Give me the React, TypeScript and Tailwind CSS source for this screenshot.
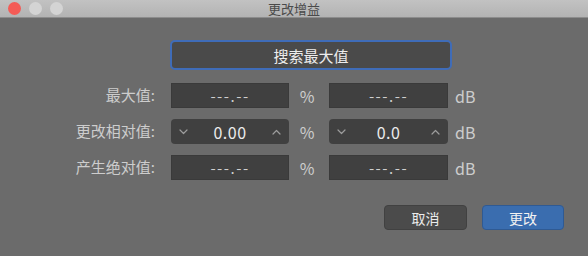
import React from 'react';

const FONT = { fontFamily: '"Noto Sans CJK SC", "Noto Sans", sans-serif' };

function Chevron({ up }: { up?: boolean }) {
    return (
        <svg width="9" height="6" viewBox="0 0 9 6" className="shrink-0">
            <path
                d={up ? 'M1 5 L4.5 1.5 L8 5' : 'M1 1 L4.5 4.5 L8 1'}
                fill="none"
                stroke="#9c9c9c"
                strokeWidth="1.2"
                strokeLinecap="round"
                strokeLinejoin="round"
            />
        </svg>
    );
}

function Field({ value, stepper, w }: { value: string; stepper?: boolean; w: string }) {
    if (stepper) {
        return (
            <div className={`${w} h-[25px] rounded-[4px] bg-[#404040] flex items-center justify-between px-[8px]`}>
                <Chevron />
                <span className="text-[16px] text-[#ececec] leading-none tracking-[0.5px]">{value}</span>
                <Chevron up />
            </div>
        );
    }
    return (
        <div className={`${w} h-[25px] bg-[#404040] border border-[#3a3a3a] flex items-center justify-center`}>
            <span className="text-[15px] text-[#cfcfcf] leading-none tracking-[1.5px]">{value}</span>
        </div>
    );
}

function Row({ label, left, right, stepper }: { label: string; left: string; right: string; stepper?: boolean }) {
    return (
        <div className="flex items-center h-[25px]">
            <div className="w-[157px] text-right text-[15px] text-[#cdcdcd] pr-[2px]">{label}</div>
            <div className="w-[14px]" />
            <Field value={left} stepper={stepper} w="w-[118px]" />
            <div className="w-[40px] text-center text-[16px] text-[#cdcdcd] pr-[4px]">%</div>
            <Field value={right} stepper={stepper} w="w-[119px]" />
            <div className="pl-[7px] text-[16px] text-[#cdcdcd]">dB</div>
        </div>
    );
}

export default function App() {
    return (
        <div className="w-[588px] h-[256px] bg-[#6b6b6b] flex flex-col overflow-hidden" style={FONT}>
            <div className="h-[18px] relative bg-gradient-to-b from-[#c2c2c2] to-[#b3b3b3] border-b border-[#8c8c8c] flex items-center justify-center">
                <div className="absolute left-[8px] top-[2px] flex gap-[8px]">
                    <span className="w-[13px] h-[13px] rounded-full bg-[#f45b56]" />
                    <span className="w-[13px] h-[13px] rounded-full bg-[#d4d4d4]" />
                    <span className="w-[13px] h-[13px] rounded-full bg-[#d4d4d4]" />
                </div>
                <span className="text-[13px] text-[#4a4a4a] leading-none">更改增益</span>
            </div>

            <div className="flex flex-col pt-[22px]">
                <div className="pl-[170px]">
                    <div className="w-[282px] h-[30px] rounded-[5px] bg-[#3f6cb8] p-[2px]">
                        <div className="w-full h-full rounded-[3px] bg-[#4a4a4a] flex items-center justify-center">
                            <span className="text-[15px] text-[#ededed] leading-none">搜索最大值</span>
                        </div>
                    </div>
                </div>

                <div className="flex flex-col gap-[11px] mt-[13px]">
                    <Row label="最大值:" left="---.--" right="---.--" />
                    <Row label="更改相对值:" left="0.00" right="0.0" stepper />
                    <Row label="产生绝对值:" left="---.--" right="---.--" />
                </div>

                <div className="flex justify-end gap-[15px] pr-[24px] mt-[25px]">
                    <button className="w-[83px] h-[25px] rounded-[4px] bg-[#4b4b4b] border border-[#414141] text-[14px] text-[#ececec] leading-none">
                        取消
                    </button>
                    <button className="w-[82px] h-[25px] rounded-[4px] bg-[#3a6daf] border border-[#2f5a93] text-[14px] text-[#f2f2f2] leading-none">
                        更改
                    </button>
                </div>
            </div>
        </div>
    );
}
